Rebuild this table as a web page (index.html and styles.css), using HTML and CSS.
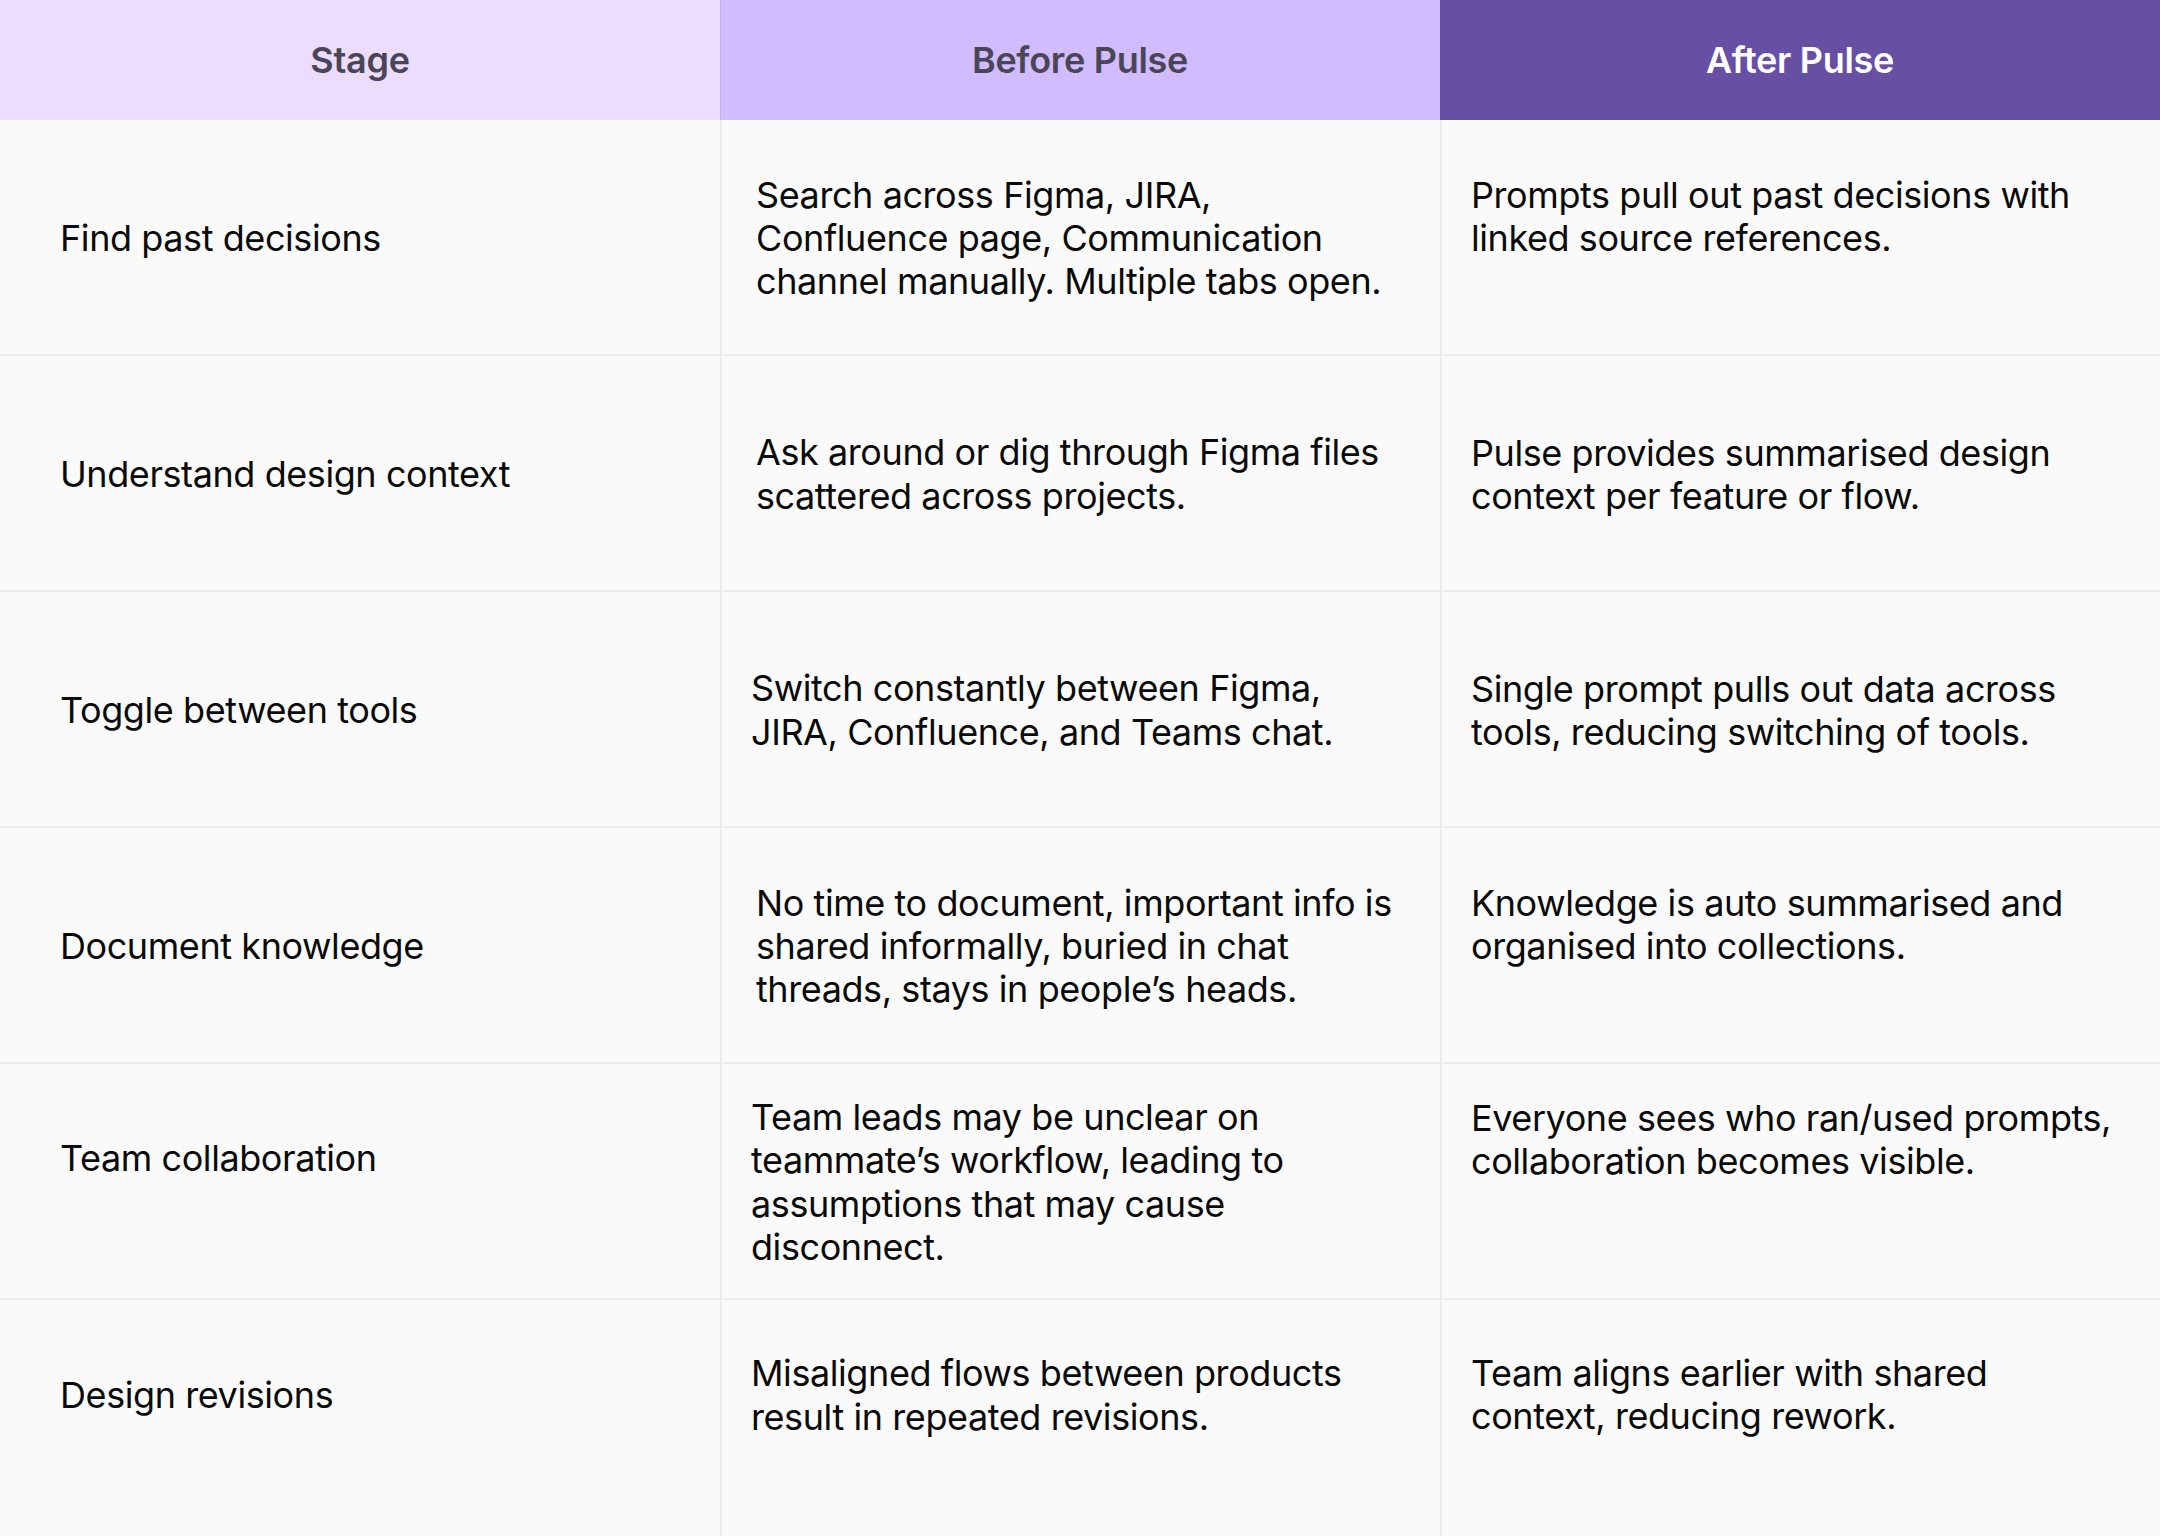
FILE: index.html
```html
<!DOCTYPE html>
<html lang="en">
<head>
<meta charset="utf-8">
<title>Before / After Pulse</title>
<link rel="stylesheet" href="styles.css">
</head>
<body>
<div class="table">
  <div class="head head--stage">Stage</div>
  <div class="head head--before">Before Pulse</div>
  <div class="head head--after">After Pulse</div>

  <div class="cell cell--stage">Find past decisions</div>
  <div class="cell cell--before">Search across Figma, JIRA,<br>Confluence page, Communication<br>channel manually. Multiple tabs open.</div>
  <div class="cell cell--after top-3">Prompts pull out past decisions with<br>linked source references.</div>

  <div class="cell cell--stage">Understand design context</div>
  <div class="cell cell--before">Ask around or dig through Figma files<br>scattered across projects.</div>
  <div class="cell cell--after top-2">Pulse provides summarised design<br>context per feature or flow.</div>

  <div class="cell cell--stage">Toggle between tools</div>
  <div class="cell cell--before cell--narrow">Switch constantly between Figma,<br>JIRA, Confluence, and Teams chat.</div>
  <div class="cell cell--after top-2">Single prompt pulls out data across<br>tools, reducing switching of tools.</div>

  <div class="cell cell--stage">Document knowledge</div>
  <div class="cell cell--before">No time to document, important info is<br>shared informally, buried in chat<br>threads, stays in people’s heads.</div>
  <div class="cell cell--after top-3">Knowledge is auto summarised and<br>organised into collections.</div>

  <div class="cell cell--stage cell--raised">Team collaboration</div>
  <div class="cell cell--before cell--narrow">Team leads may be unclear on<br>teammate’s workflow, leading to<br>assumptions that may cause<br>disconnect.</div>
  <div class="cell cell--after top-4">Everyone sees who ran/used prompts,<br>collaboration becomes visible.</div>

  <div class="cell cell--stage cell--raised cell--last">Design revisions</div>
  <div class="cell cell--before cell--narrow cell--raised cell--last">Misaligned flows between products<br>result in repeated revisions.</div>
  <div class="cell cell--after cell--raised cell--last">Team aligns earlier with shared<br>context, reducing rework.</div>
</div>
</body>
</html>
```
FILE: styles.css
```css
html, body {
  margin: 0;
  padding: 0;
}

body {
  width: 2160px;
  height: 1536px;
  overflow: hidden;
  background: #fafafa;
  font-family: Inter, "Noto Sans", "Liberation Sans", sans-serif;
  -webkit-font-smoothing: antialiased;
}

.table {
  display: grid;
  grid-template-columns: 720px 720px 720px;
  grid-template-rows: 120px repeat(6, 236px);
}

.head {
  display: flex;
  align-items: center;
  justify-content: center;
  padding-bottom: 1px;
  font-size: 36px;
  font-weight: 600;
  letter-spacing: -0.3px;
  color: #4b4655;
}

.head--stage {
  background: #ecdcff;
}

.head--before {
  background: #d0bcff;
  box-shadow: inset 1px 0 0 #c3aef0;
}

.head--after {
  background: #6750a4;
  color: #ffffff;
}

.cell {
  box-sizing: border-box;
  display: flex;
  flex-direction: column;
  justify-content: center;
  padding-top: 3px;
  border-bottom: 2px solid #ebebeb;
  font-size: 36px;
  line-height: 43.2px;
  letter-spacing: -0.42px;
  color: #0a0a0a;
  white-space: nowrap;
}

.cell--stage {
  padding-left: 60px;
}

.cell--before {
  border-left: 2px solid #ebebeb;
  padding-left: 34px;
}

.cell--before.cell--narrow {
  padding-left: 29px;
}

.cell--after {
  border-left: 2px solid #ebebeb;
  padding-left: 29px;
  justify-content: flex-start;
}

.cell--after.top-2 {
  padding-top: 75.5px;
}

.cell--after.top-3 {
  padding-top: 53.5px;
}

.cell--after.top-4 {
  padding-top: 32.5px;
}

.cell--raised {
  padding-bottom: 48px;
}

.cell--after.cell--raised {
  padding-top: 51.5px;
  padding-bottom: 0;
}

.cell--last {
  border-bottom: none;
}
```
